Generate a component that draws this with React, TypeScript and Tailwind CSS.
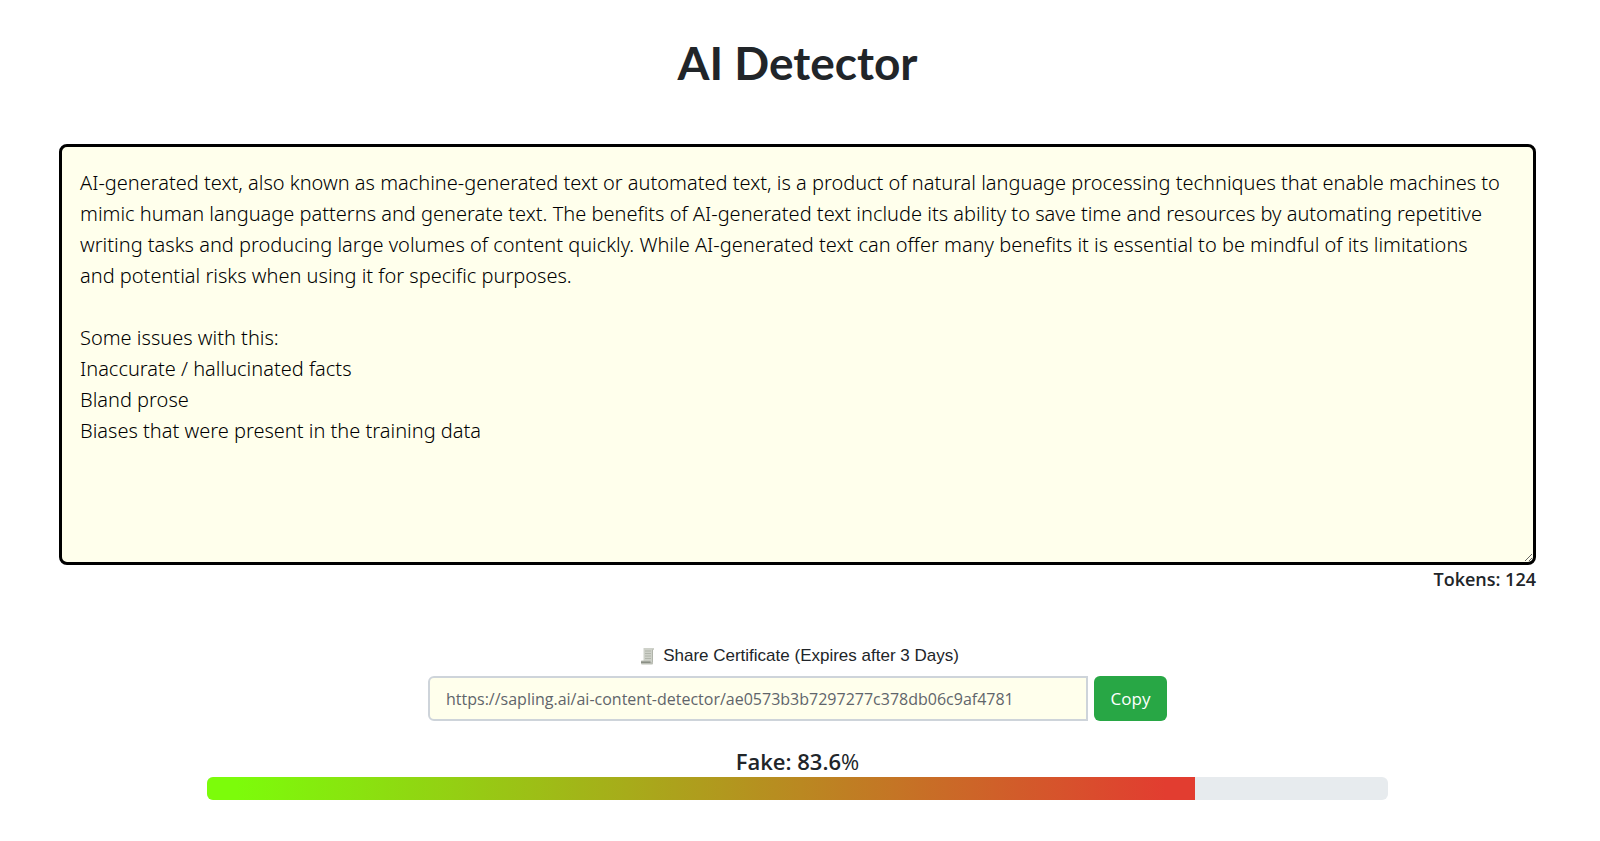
import { useState } from "react";

const SAMPLE_TEXT = `AI-generated text, also known as machine-generated text or automated text, is a product of natural language processing techniques that enable machines to mimic human language patterns and generate text. The benefits of AI-generated text include its ability to save time and resources by automating repetitive writing tasks and producing large volumes of content quickly. While AI-generated text can offer many benefits it is essential to be mindful of its limitations and potential risks when using it for specific purposes.

Some issues with this:
Inaccurate / hallucinated facts
Bland prose
Biases that were present in the training data`;

const SHARE_URL = "https://sapling.ai/ai-content-detector/ae0573b3b7297277c378db06c9af4781";

/** Small rolled-paper icon next to the share label. */
function ScrollIcon() {
  return (
    <svg width="15" height="18" viewBox="0 0 15 18" aria-hidden="true">
      <path d="M3.5 1H14v2h-1v12H3.5z" fill="#ced1c9" />
      <path d="M12 2.5h1V15h-1z" fill="#b0b4aa" />
      <path d="M5 4h6M5 6.5h6M5 9h6M5 11.5h6" stroke="#a9ada3" strokeWidth="0.8" />
      <path d="M1.5 13.5h9v1.5H13v1.5a1 1 0 0 1-1 1H2a1 1 0 0 1-1-1V14z" fill="#bcbfb6" />
      <path d="M1 14.5h9.5V16H1z" fill="#8b8f85" />
    </svg>
  );
}

/** Share link with its copy button. */
function ShareCertificate({ url }: { url: string }) {
  return (
    <div className="mx-auto w-full max-w-[739px]">
      <label
        htmlFor="share-url"
        className="flex items-center justify-center gap-2 pl-1 font-['Liberation_Sans',sans-serif] text-[17px] leading-6"
      >
        <ScrollIcon />
        Share Certificate (Expires after 3 Days)
      </label>
      <div className="mt-2 flex gap-1.5">
        <input
          id="share-url"
          readOnly
          value={url}
          className="h-[45px] min-w-0 flex-1 rounded-l-md border-2 border-[#ced4da] bg-[#ffffec] px-4 text-base text-[#5f656b] outline-none"
        />
        <button
          onClick={() => navigator.clipboard.writeText(url)}
          className="h-[45px] w-[73px] rounded-md bg-[#28a745] text-[17px] text-white"
        >
          Copy
        </button>
      </div>
    </div>
  );
}

/** Score label above the gradient bar. */
function ScoreBar({ score }: { score: number }) {
  return (
    <div className="mx-auto w-4/5">
      <p className="text-center text-[22px] leading-8">
        <span className="font-semibold">Fake: {score}</span>
        <span>%</span>
      </p>
      <div className="h-[23px] overflow-hidden rounded-md bg-[#e7ebee]">
        <div
          className="h-full bg-linear-[to_right,#7cfc0a_3%,#e23d30_97%]"
          style={{ width: `${score}%` }}
        />
      </div>
    </div>
  );
}

export default function App() {
  const [text, setText] = useState(SAMPLE_TEXT);

  return (
    <main className="bg-white pt-8 pr-16 pl-[59px] font-['Open_Sans',sans-serif] text-[#212529]">
      <h1 className="text-center font-['Lato',sans-serif] text-[46px] leading-[62px] font-bold">AI Detector</h1>

      <textarea
        aria-label="Text to check"
        value={text}
        onChange={(e) => setText(e.target.value)}
        className="mt-[50px] block h-[421px] w-full resize rounded-lg border-3 border-black bg-[#ffffec] py-5 pr-[30px] pl-[18px] font-['Noto_Sans',sans-serif] text-xl leading-[31px] font-light text-black outline-none"
      />
      <p className="text-right text-lg leading-[29px] font-semibold">Tokens: 124</p>

      <div className="mt-[50px]">
        <ShareCertificate url={SHARE_URL} />
      </div>
      <div className="mt-6">
        <ScoreBar score={83.6} />
      </div>
    </main>
  );
}
